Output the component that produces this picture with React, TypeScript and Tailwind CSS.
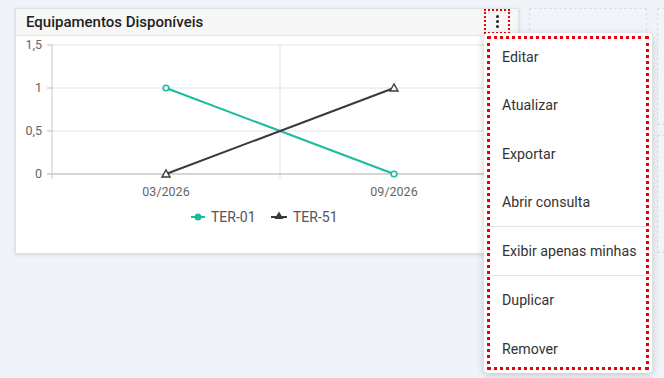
import React from "react";

const menuItems = [
  { label: "Editar" },
  { label: "Atualizar" },
  { label: "Exportar" },
  { label: "Abrir consulta", divider: true },
  { label: "Exibir apenas minhas", divider: true },
  { label: "Duplicar" },
  { label: "Remover" },
];

function Chart() {
  const teal = "#19bb9e";
  const dark = "#3a3a3a";
  return (
    <svg width="502" height="217" className="block">
      <g transform="translate(-16,-36)" fontFamily="Roboto, 'Liberation Sans', sans-serif">
        {/* grid */}
        {[45, 88, 131].map((y) => (
          <line key={y} x1="47" x2="508" y1={y} y2={y} stroke="#e3e3e3" strokeWidth="1" />
        ))}
        <line x1="280" x2="280" y1="45" y2="179" stroke="#e3e3e3" />
        <line x1="508" x2="508" y1="45" y2="179" stroke="#e3e3e3" />
        {/* axes */}
        <line x1="52" x2="52" y1="45" y2="179" stroke="#c8c8c8" />
        <line x1="47" x2="508" y1="174" y2="174" stroke="#c8c8c8" strokeWidth="1.5" />
        {[45, 88, 131].map((y) => (
          <line key={"t" + y} x1="47" x2="52" y1={y} y2={y} stroke="#c8c8c8" />
        ))}
        {/* y labels */}
        {[
          ["1,5", 45],
          ["1", 88],
          ["0,5", 131],
          ["0", 174],
        ].map(([t, y]) => (
          <text key={t as string} x="42" y={(y as number) + 4} textAnchor="end" fontSize="12.5" fill="#666">
            {t}
          </text>
        ))}
        {/* x labels */}
        <text x="166" y="196" textAnchor="middle" fontSize="12.5" fill="#666">03/2026</text>
        <text x="394" y="196" textAnchor="middle" fontSize="12.5" fill="#666">09/2026</text>
        {/* series */}
        <line x1="166" y1="88" x2="394" y2="174" stroke={teal} strokeWidth="2" />
        <line x1="166" y1="174" x2="394" y2="88" stroke={dark} strokeWidth="2" />
        <circle cx="166" cy="88" r="2.8" fill="#fff" stroke={teal} strokeWidth="1.6" />
        <circle cx="394" cy="174" r="2.8" fill="#fff" stroke={teal} strokeWidth="1.6" />
        <polygon points="166,170 162,177 170,177" fill="#fff" stroke={dark} strokeWidth="1.4" />
        <polygon points="394,84 390,91 398,91" fill="#fff" stroke={dark} strokeWidth="1.4" />
        {/* legend */}
        <line x1="191" x2="205" y1="217" y2="217" stroke={teal} strokeWidth="2" />
        <circle cx="198" cy="217" r="3.5" fill={teal} />
        <text x="211" y="222" fontSize="14" fill="#555">TER-01</text>
        <line x1="271" x2="287" y1="217" y2="217" stroke={dark} strokeWidth="2" />
        <polygon points="279,211.5 274.5,219 283.5,219" fill={dark} />
        <text x="293" y="222" fontSize="14" fill="#555">TER-51</text>
      </g>
    </svg>
  );
}

export default function App() {
  return (
    <div
      className="relative w-[664px] h-[378px] overflow-hidden bg-[#f0f4f8]"
      style={{ fontFamily: "Roboto, 'Liberation Sans', sans-serif" }}
    >
      <div className="flex gap-[10px] pl-[15px] pt-[8px]">
        {/* widget card */}
        <div className="w-[504px] h-[246px] shrink-0 bg-white border border-[#e2e2e2] shadow-[0_1px_3px_rgba(0,0,0,0.12)]">
          <div className="h-[27px] flex items-center justify-between pl-[10px] pr-[10px] bg-[#f7f7f7] border-b border-[#e6e6e6]">
            <span className="text-[15px] font-medium text-[#1f1f1f]">Equipamentos Disponíveis</span>
            <button className="w-[22px] h-[21px] flex flex-col items-center justify-center gap-[2px] outline-[2.5px] outline-dotted outline-red-600 -mt-[1px]">
              <span className="w-[3px] h-[3px] rounded-full bg-[#222]" />
              <span className="w-[3px] h-[3px] rounded-full bg-[#222]" />
              <span className="w-[3px] h-[3px] rounded-full bg-[#222]" />
            </button>
          </div>
          <Chart />
        </div>

        {/* placeholder slots */}
        <div className="flex flex-col gap-[10px] shrink-0">
          <div className="w-[118px] h-[117px] border border-dashed border-[#dcdfe3] bg-[#f1f4f8]" />
          <div className="w-[118px] h-[118px] border border-dashed border-[#dcdfe3] bg-[#f1f4f8]" />
        </div>
        <div className="flex flex-col gap-[10px] shrink-0">
          <div className="w-[118px] h-[117px] border border-dashed border-[#dcdfe3] bg-[#f1f4f8]" />
          <div className="w-[118px] h-[118px] border border-dashed border-[#dcdfe3] bg-[#f1f4f8]" />
        </div>
      </div>

      {/* dropdown menu */}
      <div className="absolute left-[484px] top-[33px] w-[168px] h-[340px] bg-white rounded-[4px] shadow-[0_2px_8px_rgba(0,0,0,0.2)] outline-[3px] outline-dotted outline-red-600 outline-offset-[-6px] flex flex-col">
        {menuItems.map((item) => (
          <div
            key={item.label}
            className={`flex-1 flex items-center pl-[18px] pt-[1px] text-[14.2px] text-[#333] ${item.divider ? "border-b border-[#e4e4e4]" : ""}`}
          >
            {item.label}
          </div>
        ))}
      </div>
    </div>
  );
}
